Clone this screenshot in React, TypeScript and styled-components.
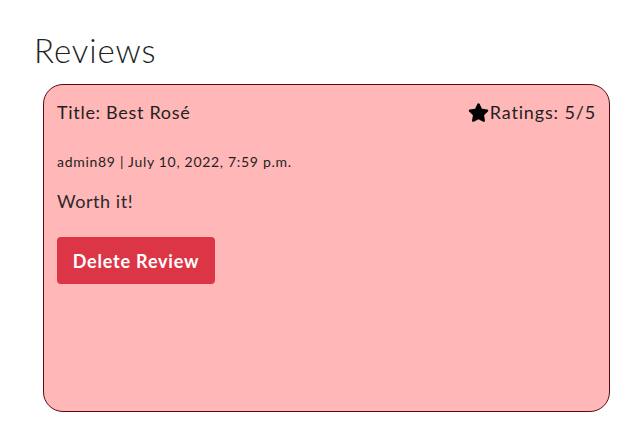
import styled, { createGlobalStyle } from 'styled-components';
import { FaStar } from 'react-icons/fa';

const GlobalStyle = createGlobalStyle`
  body {
    margin: 0;
    background: #ffffff;
    font-family: Lato, "Open Sans", sans-serif;
    color: #212529;
  }
`;

const Page = styled.div`
  padding: 30px 32px 16px 34px;
`;

const Heading = styled.h2`
  margin: 0 0 14px 0;
  font-size: 33px;
  font-weight: 300;
  line-height: 40px;
  letter-spacing: 0.9px;
  color: #222;
`;

const Card = styled.div`
  margin-left: 9px;
  width: 567px;
  height: 328px;
  box-sizing: border-box;
  padding: 16px 13px;
  background: #ffb7b7;
  border: 1px solid #5c0a14;
  border-radius: 20px;
`;

const TopRow = styled.div`
  display: flex;
  justify-content: space-between;
  align-items: center;
  font-size: 18px;
  line-height: 22px;
  letter-spacing: 0.7px;
  color: #1f1f1f;
`;

const Rating = styled.div`
  display: flex;
  align-items: center;
  gap: 1px;
  letter-spacing: 0.85px;

  svg {
    width: 21px;
    height: 21px;
    color: #000;
  }
`;

const Meta = styled.p`
  margin: 29px 0 0 0;
  font-size: 14px;
  line-height: 20px;
  letter-spacing: 0.7px;
  color: #1f1f1f;
`;

const Body = styled.p`
  margin: 17px 0 0 0;
  font-size: 18px;
  line-height: 24px;
  letter-spacing: 0.55px;
  color: #2a2a2a;
`;

const DeleteButton = styled.button`
  margin-top: 24px;
  width: 158px;
  height: 47px;
  background: #dc3545;
  color: #fff;
  border: none;
  border-radius: 4px;
  font-family: Lato, "Open Sans", sans-serif;
  font-size: 18px;
  font-weight: 700;
  letter-spacing: 0.8px;
  cursor: pointer;
`;

export default function App() {
  return (
    <>
      <GlobalStyle />
      <Page>
        <Heading>Reviews</Heading>
        <Card>
          <TopRow>
            <span>Title: Best Rosé</span>
            <Rating>
              <FaStar />
              <span>Ratings: 5/5</span>
            </Rating>
          </TopRow>
          <Meta>admin89 | July 10, 2022, 7:59 p.m.</Meta>
          <Body>Worth it!</Body>
          <DeleteButton>Delete Review</DeleteButton>
        </Card>
      </Page>
    </>
  );
}
